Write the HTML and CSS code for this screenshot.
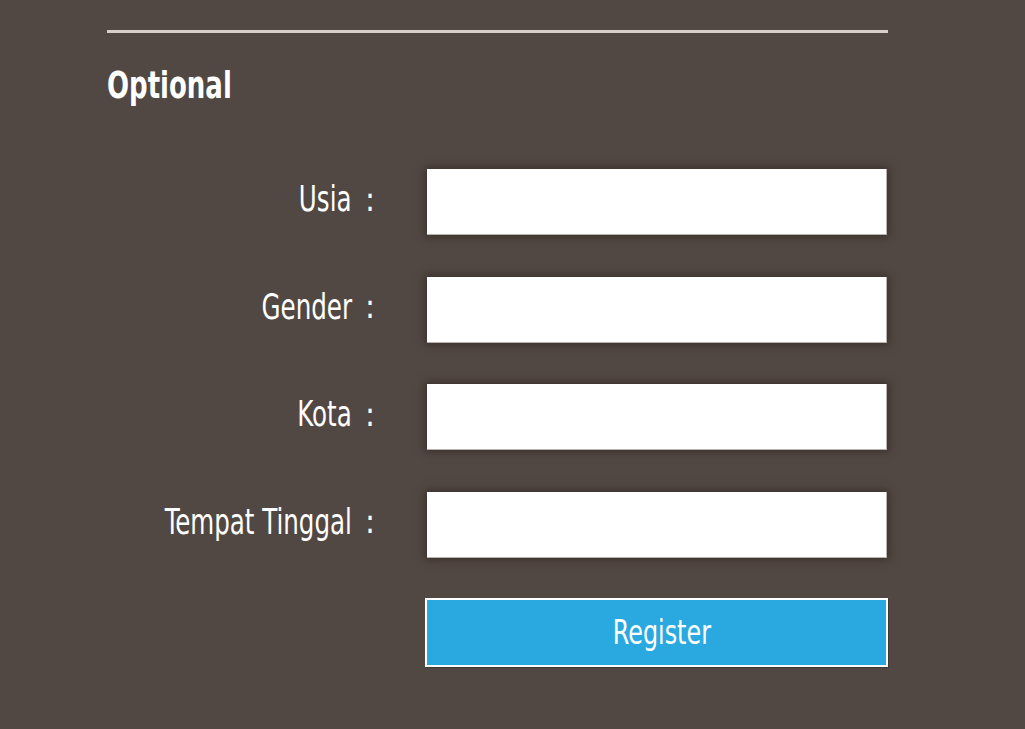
FILE: index.html
```html
<!DOCTYPE html>
<html lang="id">
<head>
<meta charset="utf-8">
<title>Optional</title>
<link rel="stylesheet" href="styles.css">
</head>
<body>
<div class="page">
  <hr class="rule">
  <h2 class="title"><span class="narrow left">Optional</span></h2>
  <form class="form">
    <div class="row">
      <label class="label"><span class="narrow right">Usia</span></label><span class="colon">:</span>
      <input class="field" type="text">
    </div>
    <div class="row">
      <label class="label"><span class="narrow right">Gender</span></label><span class="colon">:</span>
      <input class="field" type="text">
    </div>
    <div class="row">
      <label class="label"><span class="narrow right">Kota</span></label><span class="colon">:</span>
      <input class="field" type="text">
    </div>
    <div class="row">
      <label class="label"><span class="narrow right">Tempat Tinggal</span></label><span class="colon">:</span>
      <input class="field" type="text">
    </div>
    <div class="row">
      <button class="btn" type="button"><span class="narrow">Register</span></button>
    </div>
  </form>
</div>
</body>
</html>
```
FILE: styles.css
```css
html, body {
  margin: 0;
  padding: 0;
  background: #524843;
  height: 100%;
}
body {
  font-family: "DejaVu Sans Condensed", "DejaVu Sans", sans-serif;
  font-stretch: condensed;
  color: #ffffff;
}
.page {
  width: 781px;
  margin-left: 107px;
  padding-top: 30px;
}
.rule {
  margin: 0;
  border: 0;
  height: 3px;
  background: #d8cfca;
}
.narrow {
  display: inline-block;
  transform: scaleX(0.78);
  transform-origin: center;
  white-space: nowrap;
}
.narrow.left {
  transform: scaleX(0.76);
  transform-origin: left center;
}
.narrow.right {
  transform-origin: right center;
}
.title {
  margin: 30px 0 0 0;
  font-size: 38px;
  font-weight: bold;
  line-height: 44px;
}
.form {
  margin-top: 62px;
  display: flex;
  flex-direction: column;
  gap: 41.5px;
}
.row {
  display: flex;
  align-items: center;
  height: 66px;
}
.label {
  width: 245px;
  text-align: right;
  font-size: 35px;
  position: relative;
  top: -3px;
}
.colon {
  font-size: 33px;
  margin-left: 13px;
  position: relative;
  top: -3px;
}
.field {
  margin-left: auto;
  margin-right: 1px;
  width: 460px;
  height: 66px;
  box-sizing: border-box;
  border: 0;
  border-right: 1px solid #b9b2ae;
  border-bottom: 1px solid #b9b2ae;
  background: #ffffff;
  box-shadow: 0 0 8px 2px rgba(35, 25, 20, 0.5);
  outline: none;
}
.btn {
  margin-left: auto;
  height: 69px;
  width: 463px;
  box-sizing: border-box;
  background: #29a9e0;
  border: 2px solid #ffffff;
  color: #ffffff;
  font-family: inherit;
  font-stretch: condensed;
  font-size: 34px;
  padding: 0 0 0 10px;
  box-shadow: 1px 1px 1px rgba(0,0,0,0.2);
}
```
